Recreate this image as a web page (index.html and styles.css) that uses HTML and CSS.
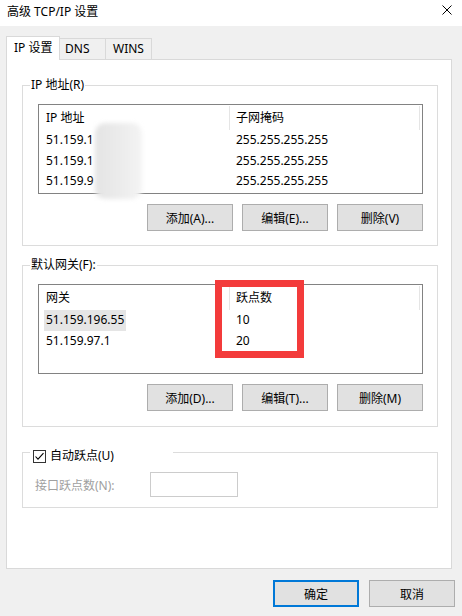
FILE: index.html
```html
<!DOCTYPE html>
<html lang="zh-CN">
<head>
  <meta charset="UTF-8" />
  <title>高级 TCP/IP 设置</title>
  <link rel="stylesheet" href="styles.css">
</head>
<body>

  <div class="titlebar">
    <span class="title">高级 TCP/IP 设置</span>
    <svg class="close" width="10" height="10" viewBox="0 0 10 10">
      <path d="M0.5 0.5 L9.5 9.5 M9.5 0.5 L0.5 9.5" stroke="#000" stroke-width="1" fill="none" />
    </svg>
  </div>

  <div class="dialog">
    <div class="tabs">
      <div class="tab active">IP 设置</div>
      <div class="tab tab-dns">DNS</div>
      <div class="tab tab-wins">WINS</div>
    </div>

    <div class="panel">
      <!-- IP addresses -->
      <fieldset class="group">
        <legend>IP 地址(R)</legend>
        <div class="list">
          <div class="list-row list-head">
            <div class="cell">IP 地址</div>
            <div class="cell">子网掩码</div>
            <div class="cell filler"></div>
          </div>
          <div class="list-row">
            <div class="cell"><span>51.159.1</span></div>
            <div class="cell"><span>255.255.255.255</span></div>
          </div>
          <div class="list-row">
            <div class="cell"><span>51.159.1</span></div>
            <div class="cell"><span>255.255.255.255</span></div>
          </div>
          <div class="list-row">
            <div class="cell"><span>51.159.9</span></div>
            <div class="cell"><span>255.255.255.255</span></div>
          </div>
          <div class="smudge"></div>
        </div>
        <div class="btn-row">
          <button>添加(A)...</button>
          <button>编辑(E)...</button>
          <button>删除(V)</button>
        </div>
      </fieldset>

      <!-- Default gateways -->
      <fieldset class="group group-gw">
        <legend>默认网关(F):</legend>
        <div class="list">
          <div class="list-row list-head">
            <div class="cell">网关</div>
            <div class="cell">跃点数</div>
            <div class="cell filler"></div>
          </div>
          <div class="list-row">
            <div class="cell"><span class="selected">51.159.196.55</span></div>
            <div class="cell"><span>10</span></div>
          </div>
          <div class="list-row">
            <div class="cell"><span>51.159.97.1</span></div>
            <div class="cell"><span>20</span></div>
          </div>
          <div class="mark"></div>
        </div>
        <div class="btn-row">
          <button>添加(D)...</button>
          <button>编辑(T)...</button>
          <button>删除(M)</button>
        </div>
      </fieldset>

      <!-- Automatic metric -->
      <fieldset class="group group-auto">
        <legend class="check-legend">
          <span class="check">
            <svg width="13" height="13" viewBox="0 0 13 13">
              <rect x="0.5" y="0.5" width="12" height="12" fill="#fff" stroke="#333" />
              <path d="M2.5 6.5 L5 9.2 L10.5 3.2" stroke="#000" stroke-width="1.1" fill="none" />
            </svg>
            自动跃点(U)
          </span>
        </legend>
        <div class="metric-row">
          <span class="metric-label">接口跃点数(N):</span>
          <input type="text" class="metric-input" disabled />
        </div>
      </fieldset>
    </div>

    <div class="actions">
      <button class="btn-primary">确定</button>
      <button>取消</button>
    </div>
  </div>

</body>
</html>
```

FILE: styles.css
```css
* {
  box-sizing: border-box;
}
body {
  margin: 0;
  width: 462px;
  height: 616px;
  overflow: hidden;
  background: #f0f0f0;
  color: #000;
  font-family: "Noto Sans", "Noto Sans CJK SC", sans-serif;
  font-size: 12px;
}

/* Title bar */
.titlebar {
  height: 26px;
  background: #fff;
  display: flex;
  align-items: flex-start;
  justify-content: space-between;
  padding: 0 10px 0 7px;
}
.title {
  line-height: 24px;
}
.close {
  margin-top: 5px;
}

.dialog {
  padding: 10px 0 0 6px;
}

/* Tabs */
.tabs {
  display: flex;
  align-items: flex-end;
  height: 23px;
}
.tab {
  width: 46px;
  height: 21px;
  line-height: 20px;
  background: #f0f0f0;
  border: 1px solid #d9d9d9;
  border-left: none;
  border-bottom: none;
}
.tab.active {
  width: 54px;
  height: 24px;
  line-height: 22px;
  margin-bottom: -1px;
  padding-left: 7px;
  background: #fff;
  border-left: 1px solid #d9d9d9;
  position: relative;
  z-index: 1;
}
.tab-dns {
  padding-left: 5px;
}
.tab-wins {
  padding-left: 7px;
}

.panel {
  width: 446px;
  height: 510px;
  background: #fff;
  border: 1px solid #d9d9d9;
  padding: 17px 13px 0 15px;
}

/* Group boxes */
.group {
  margin: 0;
  padding: 11px 0 14px;
  border: 1px solid #dcdcdc;
  min-width: 0;
}
.group legend {
  margin-left: 7px;
  padding: 0 1px;
  line-height: 16px;
}
.group-gw {
  margin-top: 11px;
  padding-bottom: 15px;
}

/* List views */
.list {
  position: relative;
  height: 90px;
  margin: 0 14px 0 15px;
  padding-top: 1px;
  background: #fff;
  border: 1px solid #828282;
}
.list-row {
  display: flex;
  height: 20.5px;
  line-height: 20.5px;
}
.list-head {
  height: 24px;
  line-height: 24px;
}
.cell {
  flex-shrink: 0;
  width: 190px;
  padding-left: 5px;
  white-space: nowrap;
}
.cell span {
  display: inline-block;
  padding: 0 2px;
}
.list-head .cell {
  padding-left: 7px;
}
.list-head .cell + .cell {
  border-left: 1px solid #e5e5e5;
  padding-left: 6px;
}
.list-head .cell.filler {
  width: 3px;
  padding: 0;
}
.cell .selected {
  background: #e5e5e5;
}

/* blurred-out part of the addresses */
.smudge {
  position: absolute;
  left: 56px;
  top: 18px;
  width: 47px;
  height: 76px;
  border-radius: 10px;
  background: linear-gradient(to right, #e4e4e4, #ececec 55%, #f4f4f4);
  filter: blur(2px);
}

/* red highlight drawn over the metric column */
.mark {
  position: absolute;
  left: 176px;
  top: -5px;
  width: 89px;
  height: 78px;
  border: 7px solid #f33b3b;
}

/* Buttons */
button {
  width: 86px;
  height: 27px;
  padding: 0;
  font: inherit;
  color: #000;
  background: #e1e1e1;
  border: 1px solid #adadad;
}
.btn-row {
  display: flex;
  justify-content: flex-end;
  gap: 9px;
  margin: 10px 14px 0 0;
}

/* Automatic metric */
.group-auto {
  margin-top: 13px;
  padding: 8px 0 10px;
}
.group legend.check-legend {
  width: 143px;
  padding: 8px 0 0 3px;
}
.check {
  display: flex;
  align-items: center;
  gap: 4px;
}
.check svg {
  display: block;
}
.metric-row {
  display: flex;
  align-items: center;
  padding-left: 12px;
}
.metric-label {
  width: 115px;
  color: #a0a0a0;
}
.metric-input {
  width: 88px;
  height: 25px;
  background: #fff;
  border: 1px solid #cccccc;
}

/* Dialog buttons */
.actions {
  display: flex;
  justify-content: flex-end;
  gap: 10px;
  margin-top: 11px;
  padding-right: 7px;
}
.btn-primary {
  border: 2px solid #0078d7;
}
```
